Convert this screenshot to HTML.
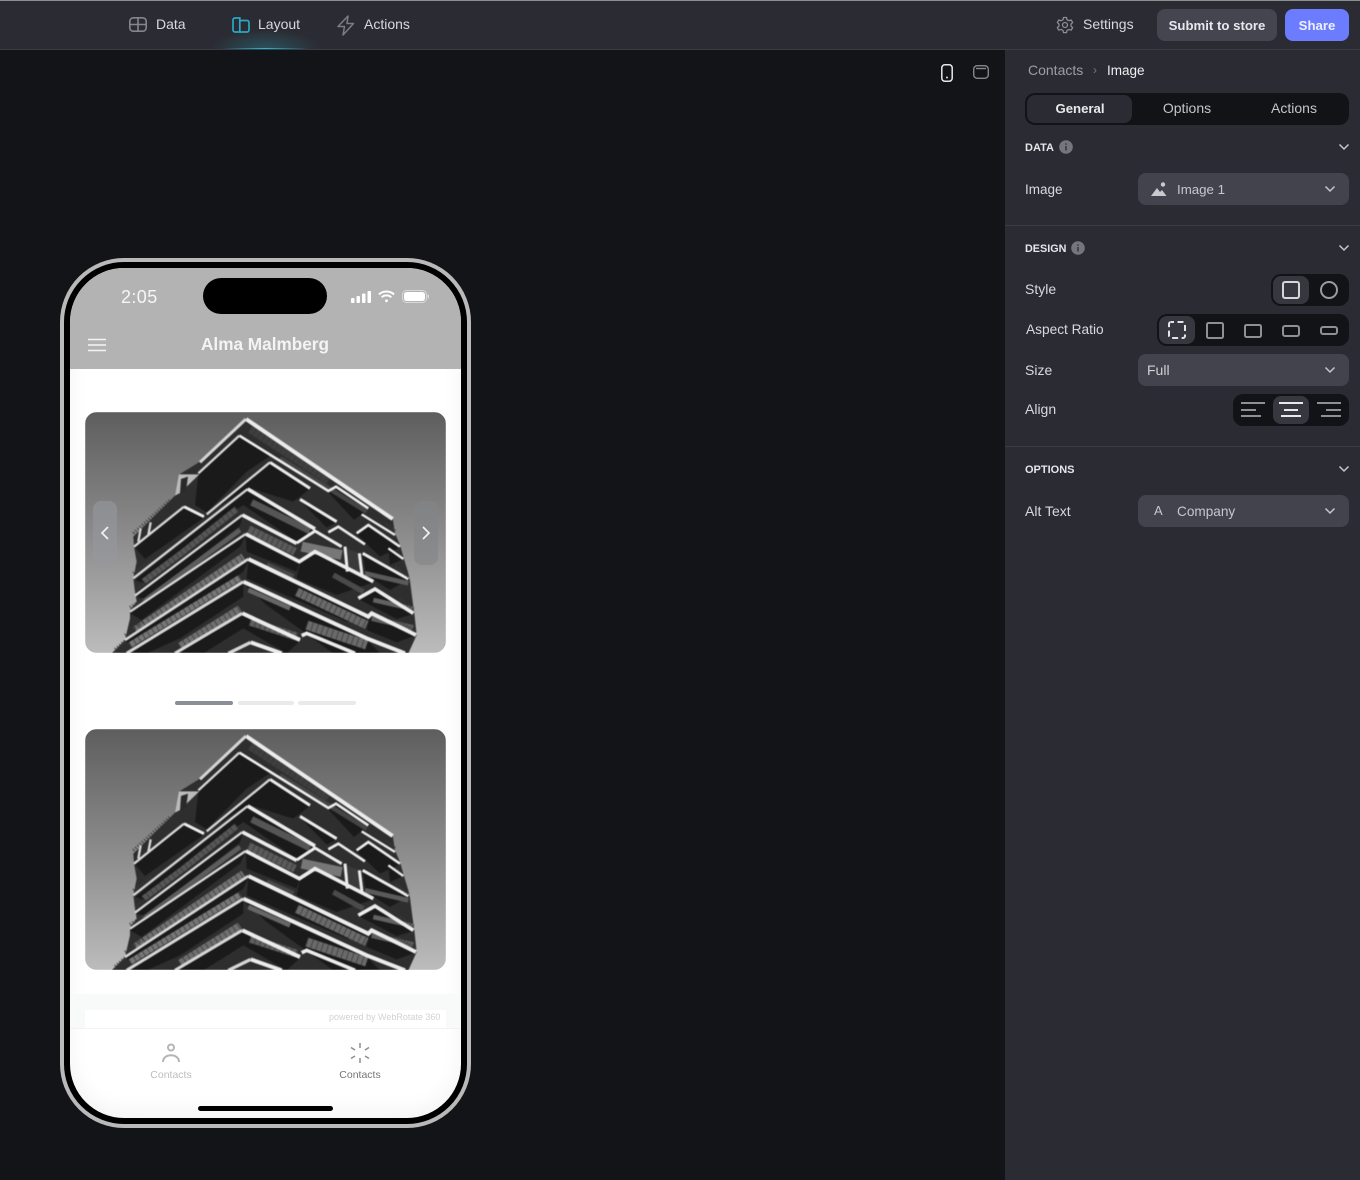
<!DOCTYPE html>
<html><head><meta charset="utf-8"><style>
*{box-sizing:border-box}
html,body{margin:0;padding:0;width:1360px;height:1180px;overflow:hidden;background:#131417;font-family:"Liberation Sans",sans-serif}
.a{position:absolute}
.t{position:absolute;line-height:20px;height:20px;font-size:14px;color:#d8d9dd;white-space:nowrap}
.c{transform:translateX(-50%)}
.h{font-size:11px;font-weight:bold;color:#e6e6ea}
.dd{position:absolute;left:1138px;width:211px;height:32px;background:#42434d;border-radius:8px}
.seg{position:absolute;background:#121316;border-radius:10px;height:32px}
.act{position:absolute;background:#37383f;border-radius:8px;height:28px;width:36px;top:2px}
svg{position:absolute;overflow:visible}
.img{filter:blur(.4px)}
</style></head><body>
<svg width="0" height="0" style="position:absolute"><defs>
<linearGradient id="sky" x1="0" y1="0" x2="0" y2="1"><stop offset="0" stop-color="#5e5e5e"/><stop offset=".5" stop-color="#8b8b8b"/><stop offset="1" stop-color="#bcbcbc"/></linearGradient>
<symbol id="bld" viewBox="15 21 1083 723">
<rect x="15" y="21" width="1083" height="723" fill="url(#sky)"/>
<polygon fill="#2e2e2e" points="498,38 938,340 945,385 960,420 972,462 985,505 990,528 998,590 1003,625 1010,690 985,745 95,745 135,705 150,640 150,615 170,590 165,560 160,520 170,470 162,425 160,395 285,272 295,210 360,170"/>
<!-- soffits -->
<g fill="#1a1a1a">
<polygon points="355,208 478,95 572,152 500,200 380,322 345,300"/>
<polygon points="380,328 570,176 690,252 640,290 505,248"/>
<polygon points="165,428 312,308 372,338 195,462"/>
<polygon points="505,256 703,372 650,410 490,300 380,375"/>
<polygon points="660,472 705,444 880,532 770,570 650,520"/>
<polygon points="835,582 885,554 1000,627 950,642"/>
<polygon points="848,448 985,524 930,555 858,510"/>
<polygon points="830,388 865,362 960,427 900,455"/>
<polygon points="745,262 768,248 865,312 822,345"/>
<polygon points="165,525 503,258 490,290 195,535"/>
<polygon points="168,575 487,336 480,362 195,582"/>
<polygon points="150,625 497,392 480,425 185,645"/>
<polygon points="497,392 658,474 650,500 500,440"/>
<polygon points="135,708 505,468 490,500 170,725"/>
<polygon points="505,468 862,640 800,650 500,520"/>
<polygon points="140,745 490,535 490,575 300,700 200,745"/>
<polygon points="490,535 860,704 900,745 760,745 560,600"/>
<polygon points="285,745 487,630 660,708 620,745 490,670 370,745"/>
<polygon points="870,630 1006,692 950,712 860,675"/>
<polygon points="925,432 970,462 930,480"/>
<polygon points="660,286 770,352 740,368"/>
</g>
<!-- glass / railing bands -->
<g fill="none" stroke="#565656">
<polyline points="190,530 310,440 470,312" stroke-width="18"/>
<polyline points="190,590 480,375" stroke-width="14" stroke="#5c5c5c"/>
<polyline points="165,675 490,455" stroke-width="22" stroke="#707070"/>
<polyline points="150,720 480,518" stroke-width="18" stroke="#767676"/>
<polyline points="300,725 480,612" stroke-width="24" stroke="#6e6e6e"/>
<polyline points="515,292 690,378" stroke-width="20" stroke="#555"/>
<polyline points="505,372 645,440" stroke-width="24" stroke="#5a5a5a"/>
<polyline points="560,480 640,515" stroke-width="16" stroke="#484848"/>
<polyline points="650,560 860,660" stroke-width="26" stroke="#6a6a6a"/>
<polyline points="505,555 630,610" stroke-width="14" stroke="#666"/>
<polyline points="510,650 650,695" stroke-width="24" stroke="#5e5e5e"/>
<polyline points="680,660 860,720" stroke-width="28" stroke="#6a6a6a"/>
<polyline points="875,640 1000,668" stroke-width="16" stroke="#5c5c5c"/>
<polyline points="880,585 1000,612" stroke-width="14" stroke="#626262"/>
<polyline points="665,425 785,450" stroke-width="30" stroke="#777"/>
<polyline points="855,505 985,535" stroke-width="14" stroke="#5a5a5a"/>
<polyline points="510,72 745,226" stroke-width="24" stroke="#3e3e3e"/>
<polyline points="600,160 860,320" stroke-width="14" stroke="#444"/>
<polyline points="760,510 850,560" stroke-width="16" stroke="#4a4a4a"/>
</g>
<!-- mullions -->
<g fill="none" stroke="#333" stroke-dasharray="2 14">
<polyline points="190,530 310,440 470,312" stroke-width="18"/>
<polyline points="165,675 490,455" stroke-width="22"/>
<polyline points="150,720 480,518" stroke-width="18"/>
<polyline points="300,725 480,612" stroke-width="24"/>
<polyline points="650,560 860,660" stroke-width="26"/>
<polyline points="510,650 650,695" stroke-width="24"/>
<polyline points="680,660 860,720" stroke-width="28"/>
<polyline points="505,372 645,440" stroke-width="24"/>
<polyline points="510,72 745,226" stroke-width="24"/>
</g>
<!-- tower block -->
<polygon points="285,272 296,208 358,208 300,264" fill="#bbb"/>
<polygon points="303,222 324,215 318,258 300,264" fill="#2a2a2a"/>
<polygon points="800,430 838,445 838,505 805,500" fill="#3a3a3a"/>
<!-- right-face white edges -->
<g fill="none" stroke="#ececec" stroke-width="11">
<polyline points="498,42 938,342" stroke-width="12"/>
<polyline points="478,92 745,258 768,245 865,310" stroke-width="8"/>
<polyline points="570,172 690,250" stroke-width="9"/>
<polyline points="312,305 372,335" stroke-width="9"/>
<polyline points="503,252 705,372"/>
<polyline points="650,414 705,378 785,425" stroke-width="9"/>
<polyline points="487,330 650,415"/>
<polyline points="497,387 658,470 705,440 880,530"/>
<polyline points="835,580 885,552 1000,625"/>
<polyline points="505,462 865,635 875,625 1008,690" stroke-width="12"/>
<polyline points="490,530 860,700 975,745" stroke-width="12"/>
<polyline points="487,625 660,705" stroke-width="12"/>
<polyline points="512,712 605,745" stroke-width="12"/>
<polyline points="665,692 680,685 825,745" stroke-width="11"/>
<polyline points="660,283 770,350" stroke-width="9"/>
<polyline points="745,382 775,365 855,418" stroke-width="8"/>
<polyline points="830,385 865,360 960,425" stroke-width="8"/>
<polyline points="845,328 945,390" stroke-width="7"/>
<polyline points="925,430 970,462" stroke-width="7"/>
<polyline points="848,445 985,522" stroke-width="9"/>
<polyline points="795,425 802,500" stroke-width="9"/>
<polyline points="838,445 846,510" stroke-width="9"/>
</g>
<!-- left-face edges -->
<g fill="none" stroke="#d6d6d6" stroke-width="7">
<polyline points="360,172 498,42" stroke-width="9"/>
<polyline points="355,205 478,92"/>
<polyline points="380,328 570,172"/>
<polyline points="162,425 312,305"/>
<polyline points="160,520 503,252"/>
<polyline points="165,572 487,330"/>
<polyline points="150,620 497,387"/>
<polyline points="135,705 505,462" stroke-width="8"/>
<polyline points="140,745 490,530" stroke-width="9"/>
<polyline points="285,745 487,625" stroke-width="9"/>
<polyline points="445,745 512,712" stroke-width="10"/>
<polyline points="175,410 182,370" stroke-width="7"/>
<polyline points="205,390 212,352" stroke-width="7"/>
</g>
<!-- railings -->
<g stroke="#3c3c3c" fill="none" stroke-dasharray="3 6" stroke-width="9">
<polyline points="105,733 135,708"/>
<polyline points="135,690 190,650"/>
<polyline points="150,607 195,580"/>
<polyline points="165,555 200,530"/>
<polyline points="160,505 215,465"/>
<polyline points="160,385 270,285"/>
<polyline points="945,378 915,355"/>
<polyline points="985,515 945,485"/>
<polyline points="1000,612 955,580"/>
<polyline points="1005,678 955,648"/>
</g>
</symbol></defs></svg>

<!-- top bar -->
<div class="a" style="left:0;top:0;width:1360px;height:50px;background:#2b2c33;border-bottom:1px solid #3c3d44"></div>
<div class="a" style="left:0;top:0;width:1360px;height:1px;background:#8d8e92"></div>
<div class="a" style="left:212px;top:30px;width:108px;height:19px;background:radial-gradient(ellipse 50% 100% at 50% 100%,rgba(40,170,195,.3),rgba(40,170,195,0))"></div>
<div class="a" style="left:222px;top:48px;width:86px;height:1px;background:linear-gradient(90deg,rgba(40,180,205,0),#2bb5d0,rgba(40,180,205,0))"></div>
<svg style="left:129px;top:17px" width="18" height="15" fill="none" stroke="#85868d" stroke-width="1.6"><rect x=".8" y=".8" width="16.4" height="13.4" rx="3.5"/><path d="M.8 7.5h16.4M9 .8v13.4"/></svg>
<div class="t" style="left:156px;top:14px">Data</div>
<svg style="left:232px;top:17px" width="18" height="16" fill="none" stroke="#2ba8c4" stroke-width="1.7"><path d="M7.800 1H3a2 2 0 0 0-2 2v10a2 2 0 0 0 2 2h4.800z"/><path d="M8 3.500h7a2 2 0 0 1 2 2V13a2 2 0 0 1-2 2H8"/></svg>
<div class="t" style="left:258px;top:14px">Layout</div>
<svg style="left:337px;top:15px" width="18" height="21" fill="none" stroke="#7c7d84" stroke-width="1.5" stroke-linejoin="round"><path d="M11 1L1 11.500h6.500L6 20l10.500-11.500H10z"/></svg>
<div class="t" style="left:364px;top:14px">Actions</div>
<svg style="left:1056px;top:16px" width="18" height="18" viewBox="0 0 24 24" fill="none" stroke="#8d8e95" stroke-width="1.7" stroke-linejoin="round"><circle cx="12" cy="12" r="3.300"/><path d="M10 2h4l.7 3 2.600 1.300 2.900-1 2 3.400-2.200 2.100v2.600l2.200 2.100-2 3.400-2.900-1-2.600 1.300-.7 3h-4l-.7-3-2.600-1.300-2.900 1-2-3.400 2.200-2.100v-2.600L1.800 8.700l2-3.400 2.900 1 2.600-1.300z"/></svg>
<div class="t" style="left:1083px;top:14px">Settings</div>
<div class="a" style="left:1157px;top:9px;width:120px;height:32px;border-radius:8px;background:#44454f;color:#e8e8ec;font-size:13.200px;font-weight:bold;line-height:33px;text-align:center">Submit to store</div>
<div class="a" style="left:1285px;top:9px;width:64px;height:32px;border-radius:8px;background:#6b7cff;color:#eef0ff;font-size:13.200px;font-weight:bold;line-height:33px;text-align:center">Share</div>

<!-- canvas icons -->
<svg style="left:941px;top:64px" width="12" height="18" fill="none"><rect x=".8" y=".8" width="10.400" height="16.400" rx="3" stroke="#e8e8e8" stroke-width="1.500"/><circle cx="6" cy="13.500" r="1" fill="#ddd"/></svg>
<svg style="left:973px;top:65px" width="16" height="14" fill="none" stroke="#85868c" stroke-width="1.400"><rect x=".7" y=".7" width="14.600" height="12.600" rx="3.500"/><path d="M3 3.500h10"/></svg>

<!-- right panel -->
<div class="a" style="left:1005px;top:50px;width:355px;height:1130px;background:#2b2c33"></div>
<div class="t" style="left:1028px;top:60px;color:#9d9ea4">Contacts</div>
<div class="t" style="left:1093px;top:60px;color:#77787e;font-size:12px">›</div>
<div class="t" style="left:1107px;top:61px;color:#f0f0f2;font-size:13.500px">Image</div>
<div class="seg" style="left:1025px;top:93px;width:324px"></div>
<div class="a" style="left:1027px;top:95px;width:105px;height:28px;background:#2b2c33;border-radius:8px"></div>
<div class="t c" style="left:1080px;top:99px;font-weight:bold;color:#e9e9ec;font-size:13.200px">General</div>
<div class="t c" style="left:1187px;top:98px;color:#c4c5ca">Options</div>
<div class="t c" style="left:1294px;top:98px;color:#c4c5ca">Actions</div>

<div class="t h" style="left:1025px;top:137.500px">DATA</div>
<svg style="left:1059px;top:140px" width="14" height="14"><circle cx="7" cy="7" r="6.800" fill="#74757d"/><path d="M7 6v4.500M7 3.400v1.300" stroke="#2b2c33" stroke-width="1.300"/></svg>
<svg style="left:1339px;top:144px" width="10" height="6" fill="none" stroke="#c6c7cc" stroke-width="1.500"><path d="M.5.500l4.500 4.500 4.500-4.500"/></svg>
<div class="t" style="left:1025px;top:180px;font-size:13.500px">Image</div>
<div class="dd" style="top:173px"></div>
<svg style="left:1151px;top:182px" width="16" height="15" fill="#c9cad0"><circle cx="12" cy="2.500" r="2.200"/><path d="M0 14l6-8 3 4 2-2 4.500 6z"/></svg>
<div class="t" style="left:1177px;top:180px;color:#c6c7cc;font-size:13.300px">Image 1</div>
<svg style="left:1325px;top:186px" width="10" height="6" fill="none" stroke="#c6c7cc" stroke-width="1.500"><path d="M.5.500l4.500 4.500 4.500-4.500"/></svg>
<div class="a" style="left:1005px;top:225px;width:355px;height:1px;background:#3c3d44"></div>

<div class="t h" style="left:1025px;top:238.500px;font-size:10.800px">DESIGN</div>
<svg style="left:1071px;top:241px" width="14" height="14"><circle cx="7" cy="7" r="6.800" fill="#74757d"/><path d="M7 6v4.500M7 3.400v1.300" stroke="#2b2c33" stroke-width="1.300"/></svg>
<svg style="left:1339px;top:245px" width="10" height="6" fill="none" stroke="#c6c7cc" stroke-width="1.500"><path d="M.5.500l4.500 4.500 4.500-4.500"/></svg>

<div class="t" style="left:1025px;top:279px">Style</div>
<div class="seg" style="left:1271px;top:274px;width:78px"><div class="act" style="left:2px"></div></div>
<svg style="left:1282px;top:281px" width="18" height="18" fill="none"><rect x="1" y="1" width="16" height="16" rx="2" stroke="#d5d6da" stroke-width="2"/></svg>
<svg style="left:1320px;top:281px" width="18" height="18" fill="none"><circle cx="9" cy="9" r="8" stroke="#9a9ba0" stroke-width="2"/></svg>

<div class="t" style="left:1026px;top:320px;font-size:13.700px">Aspect Ratio</div>
<div class="seg" style="left:1157px;top:314px;width:192px"><div class="act" style="left:2px"></div></div>
<svg style="left:1168px;top:321px" width="18" height="18" fill="none"><rect x="1" y="1" width="16" height="16" rx="2" stroke="#e4e4e8" stroke-width="2" stroke-dasharray="6 3.500" stroke-dashoffset="3"/></svg>
<svg style="left:1206px;top:322px" width="18" height="17" fill="none"><rect x="1" y="1" width="16" height="15" rx="1.500" stroke="#8f9095" stroke-width="2"/></svg>
<svg style="left:1244px;top:323.500px" width="18" height="14" fill="none"><rect x="1" y="1" width="16" height="12" rx="1.500" stroke="#8f9095" stroke-width="2"/></svg>
<svg style="left:1282px;top:324.500px" width="18" height="12" fill="none"><rect x="1" y="1" width="16" height="10" rx="2" stroke="#8f9095" stroke-width="2"/></svg>
<svg style="left:1320px;top:325.500px" width="18" height="9" fill="none"><rect x="1" y="1" width="16" height="7" rx="2" stroke="#8f9095" stroke-width="2"/></svg>

<div class="t" style="left:1025px;top:360px">Size</div>
<div class="dd" style="top:354px"></div>
<div class="t" style="left:1147px;top:360px;color:#d0d1d5">Full</div>
<svg style="left:1325px;top:367px" width="10" height="6" fill="none" stroke="#c6c7cc" stroke-width="1.500"><path d="M.5.500l4.500 4.500 4.500-4.500"/></svg>

<div class="t" style="left:1025px;top:399px">Align</div>
<div class="seg" style="left:1233px;top:394px;width:116px"><div class="act" style="left:40px"></div></div>
<svg style="left:1241px;top:402px" width="24" height="16" stroke="#8f9095" stroke-width="2"><path d="M0 1h24M0 8h15M0 14h20"/></svg>
<svg style="left:1279px;top:402px" width="24" height="16" stroke="#e8e8ec" stroke-width="2"><path d="M0 1h24M5 8h14M2 14h20"/></svg>
<svg style="left:1317px;top:402px" width="24" height="16" stroke="#8f9095" stroke-width="2"><path d="M0 1h24M9 8h15M4 14h20"/></svg>
<div class="a" style="left:1005px;top:446px;width:355px;height:1px;background:#3c3d44"></div>

<div class="t h" style="left:1025px;top:459.500px">OPTIONS</div>
<svg style="left:1339px;top:466px" width="10" height="6" fill="none" stroke="#c6c7cc" stroke-width="1.500"><path d="M.5.500l4.500 4.500 4.500-4.500"/></svg>
<div class="t" style="left:1025px;top:501px">Alt Text</div>
<div class="dd" style="top:495px"></div>
<div class="t" style="left:1154px;top:501px;color:#c6c7cc;font-size:13px">A</div>
<div class="t" style="left:1177px;top:502px;color:#c6c7cc;font-size:13.600px">Company</div>
<svg style="left:1325px;top:508px" width="10" height="6" fill="none" stroke="#c6c7cc" stroke-width="1.500"><path d="M.5.500l4.500 4.500 4.500-4.500"/></svg>

<!-- phone -->
<div class="a" style="left:60px;top:258px;width:411px;height:870px;border-radius:64px;background:#000;border:4px solid #b9b9b9"></div>
<div class="a" style="left:70px;top:268px;width:391px;height:850px;border-radius:54px;background:#fff;overflow:hidden;box-shadow:inset 0 -6px 22px rgba(0,0,0,.05)">
  <div class="a" style="left:0;top:0;width:391px;height:101px;background:#b3b3b3"></div>
  <div class="a" style="left:0;top:726px;width:391px;height:34px;background:#f8f9f9"></div>
  <div class="a" style="left:15px;top:742px;width:361px;height:18px;background:#fff"></div>
  <div class="a" style="left:0;top:760px;width:391px;height:1px;background:#f1f2f2"></div>
</div>
<div class="a" style="left:203px;top:278px;width:124px;height:36px;border-radius:18px;background:#000"></div>
<div class="t" style="left:121px;top:287px;font-size:18px;color:#f6f6f6;letter-spacing:.4px">2:05</div>
<svg style="left:351px;top:290px" width="21" height="13" fill="#fff"><rect x="0" y="8" width="3.500" height="5" rx="1"/><rect x="5.500" y="6" width="3.500" height="7" rx="1"/><rect x="11" y="3.500" width="3.500" height="9.500" rx="1"/><rect x="16.500" y="1" width="3.500" height="12" rx="1"/></svg>
<svg style="left:378px;top:290px" width="17" height="13" fill="none" stroke="#fff" stroke-width="2"><path d="M1 4.500c4-4 11-4 15 0M3.700 7.300c2.600-2.500 7-2.500 9.600 0"/><circle cx="8.500" cy="10.800" r="1.400" fill="#fff" stroke="none"/></svg>
<svg style="left:402px;top:290px" width="28" height="13"><rect x=".5" y=".5" width="24" height="12" rx="4" fill="none" stroke="#d9d9d9"/><rect x="2" y="2" width="21" height="9" rx="2.700" fill="#fff"/><rect x="25.500" y="4.500" width="1.500" height="4" rx=".7" fill="#d9d9d9"/></svg>
<svg style="left:88px;top:338px" width="18" height="14" stroke="#f4f4f4" stroke-width="1.500"><path d="M0 1.500h18M0 7h18M0 12.500h18"/></svg>
<div class="t c" style="left:265px;top:334px;font-size:17.200px;font-weight:bold;color:#f4f4f4">Alma Malmberg</div>

<div class="a" style="left:85px;top:412px;width:361px;height:241px;border-radius:12px;overflow:hidden"><svg class="img" style="left:0;top:0" width="361" height="241"><use href="#bld" width="361" height="241"/></svg></div>
<div class="a" style="left:93px;top:501px;width:24px;height:64px;border-radius:8px;background:rgba(150,152,156,.62)"></div>
<div class="a" style="left:414px;top:501px;width:24px;height:64px;border-radius:8px;background:rgba(130,132,136,.62)"></div>
<svg style="left:101px;top:526px" width="8" height="14" fill="none" stroke="#f2f2f2" stroke-width="1.700"><path d="M7 1L1 7l6 6"/></svg>
<svg style="left:422px;top:526px" width="8" height="14" fill="none" stroke="#f2f2f2" stroke-width="1.700"><path d="M1 1l6 6-6 6"/></svg>
<div class="a" style="left:175px;top:701px;width:58px;height:4px;border-radius:2px;background:#8a8f98"></div>
<div class="a" style="left:238px;top:701px;width:56px;height:4px;border-radius:2px;background:#e9e9eb"></div>
<div class="a" style="left:298px;top:701px;width:58px;height:4px;border-radius:2px;background:#e9e9eb"></div>
<div class="a" style="left:85px;top:729px;width:361px;height:241px;border-radius:12px;overflow:hidden"><svg class="img" style="left:0;top:0" width="361" height="241"><use href="#bld" width="361" height="241"/></svg></div>

<div class="t" style="left:329px;top:1007px;font-size:9px;color:#d2d2d2">powered by WebRotate 360</div>
<svg style="left:161px;top:1043px" width="20" height="20" fill="none" stroke="#b5b5b5" stroke-width="2"><circle cx="10" cy="4.500" r="3"/><path d="M2 19c0-9 16-9 16 0"/></svg>
<div class="t c" style="left:171px;top:1065px;font-size:10.500px;color:#bdbdbd">Contacts</div>
<svg style="left:350px;top:1043px" width="20" height="20" stroke="#8e8e8e" stroke-width="1.500"><path d="M10 0v5M10 15v5M1 4.500l4 2.500M15 13l4 2.500M1 15.500l4-2.500M15 7l4-2.500"/></svg>
<div class="t c" style="left:360px;top:1065px;font-size:10.500px;color:#73757a">Contacts</div>
<div class="a" style="left:198px;top:1106px;width:135px;height:5px;border-radius:3px;background:#000"></div>
</body></html>
